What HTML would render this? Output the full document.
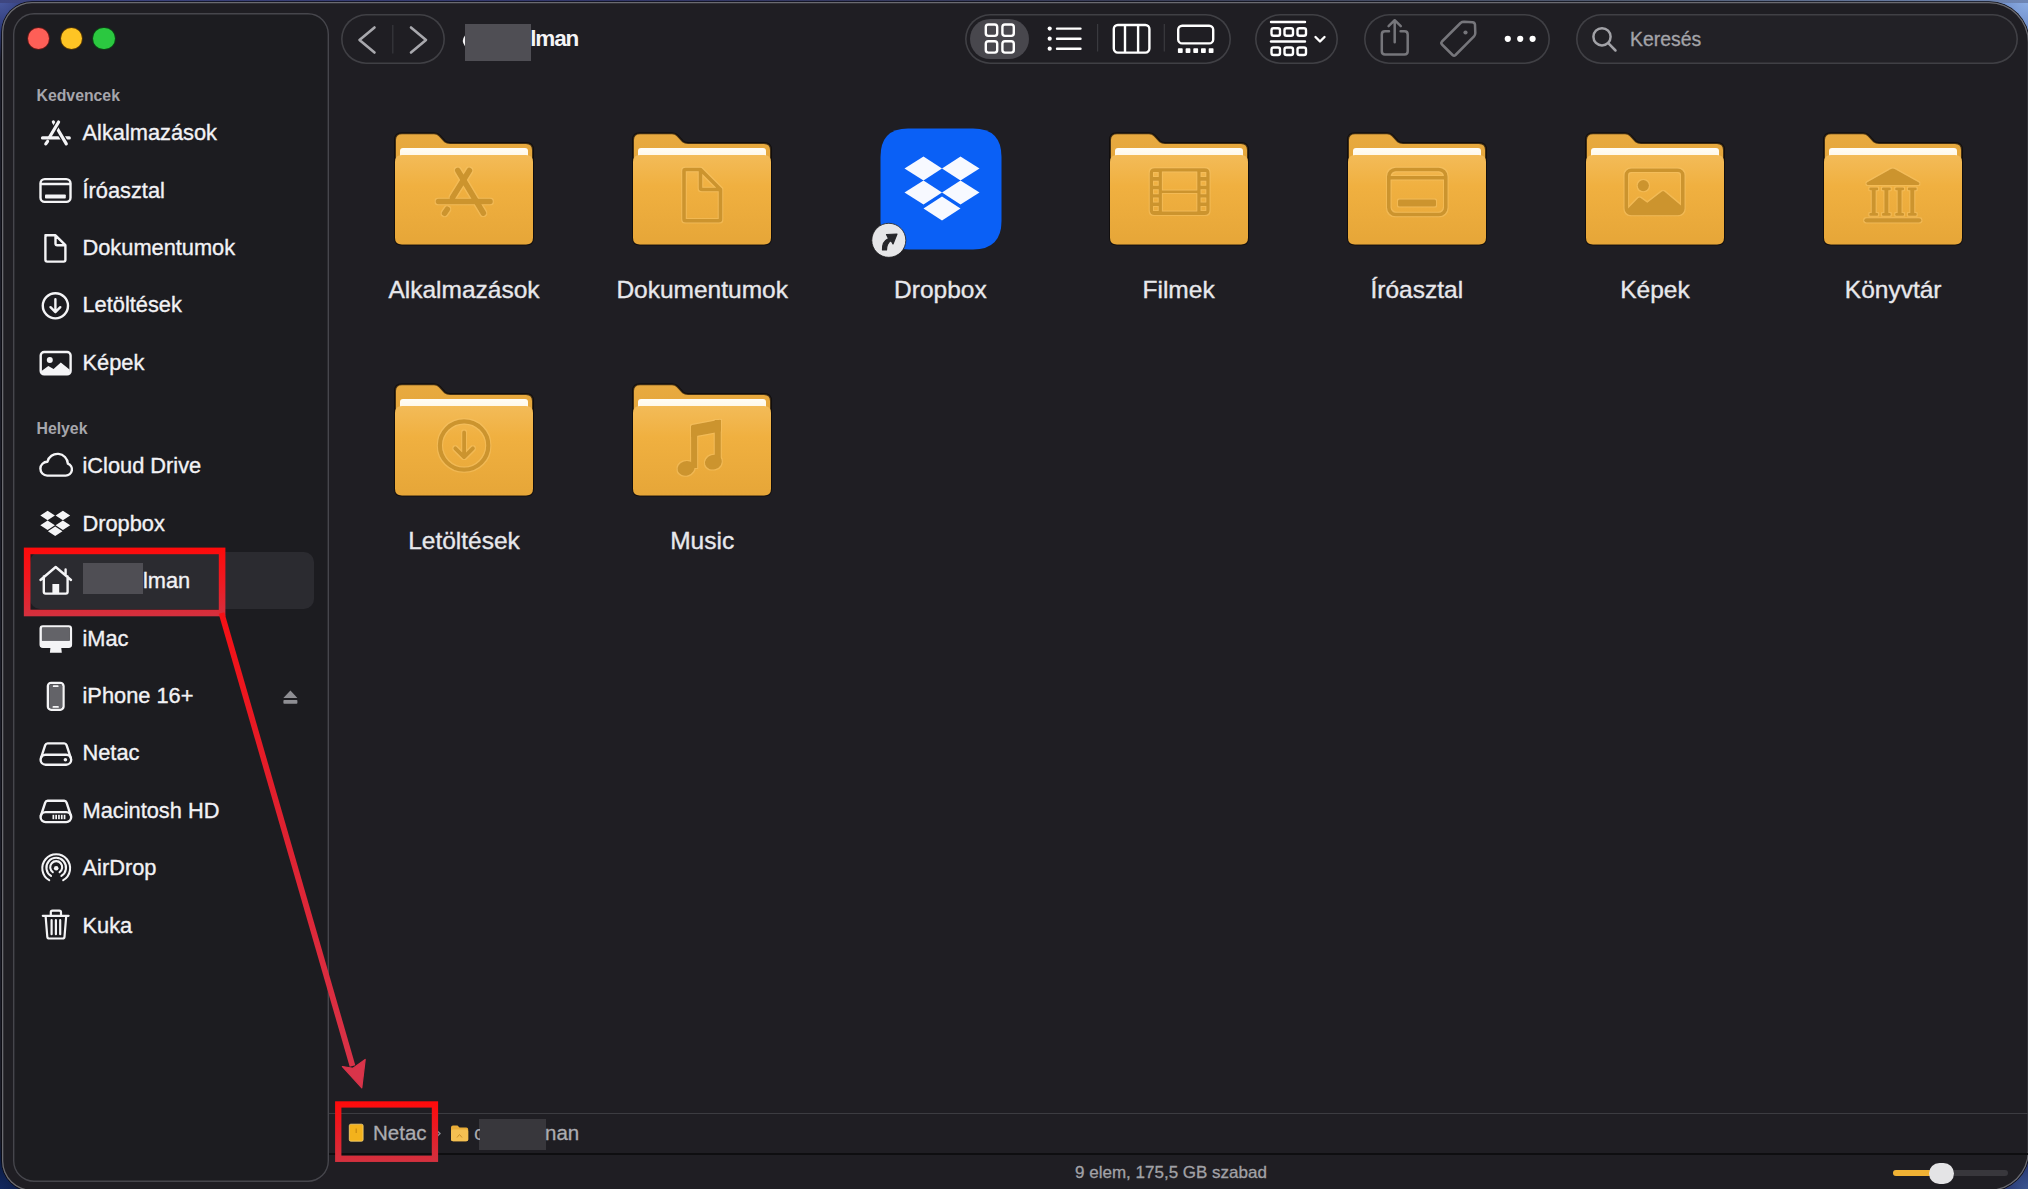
<!DOCTYPE html>
<html><head><meta charset="utf-8">
<style>
*{margin:0;padding:0;box-sizing:border-box}
html,body{width:2028px;height:1189px;overflow:hidden;background:#1f1e23;font-family:"Liberation Sans",sans-serif}
.a{position:absolute}
.t{position:absolute;white-space:nowrap;line-height:1}
svg{position:absolute;overflow:visible}
</style></head><body>
<div class="a" style="left:0;top:0;width:2028px;height:1189px;background:radial-gradient(circle at 0 0,#4a5aa0 0,#2e3a78 30px,#1c1d2a 60px,transparent 62px),radial-gradient(circle at 2028px 0,#8fb0e6 0,#6d8cc8 30px,#555c70 60px,transparent 64px),radial-gradient(circle at 0 1189px,#12285e 0,#0b1a40 30px,transparent 50px),radial-gradient(circle at 2028px 1189px,#3a5590 0,#24306a 30px,transparent 50px),#1c1d28"></div>
<div class="a" style="left:0;top:0;width:2028px;height:2.5px;background:linear-gradient(90deg,#3e4680 0%,#33386a 30%,#3a3e58 55%,#505a70 80%,#6f86b4 100%)"></div>
<div class="a" style="left:1.8px;top:1.8px;width:2027.2px;height:1189.2px;border-radius:30px 40px 40px 30px;background:#1f1e23;box-shadow:inset 0 0 0 1.3px #6a6a70,0 0 0 0.8px #0a0a10"></div>
<div class="a" style="left:13px;top:13px;width:316px;height:1169px;border-radius:21px;background:#1c1c20;box-shadow:inset 0 0 0 1.4px #46464c"></div>
<div class="a" style="left:27.8px;top:27.6px;width:21.4px;height:21.4px;border-radius:50%;background:#fe5f57;box-shadow:0 0 0 0.8px #6a1a18"></div>
<div class="a" style="left:60.6px;top:27.6px;width:21.4px;height:21.4px;border-radius:50%;background:#fec424;box-shadow:0 0 0 0.8px #5a3a05"></div>
<div class="a" style="left:93.4px;top:27.6px;width:21.4px;height:21.4px;border-radius:50%;background:#2bc840;box-shadow:0 0 0 0.8px #0a4a14"></div>
<div class="t" style="left:36.5px;top:87.9px;font-size:15.8px;color:#a6a6ac;font-weight:bold;">Kedvencek</div>
<div class="t" style="left:36.5px;top:421.0px;font-size:15.8px;color:#a6a6ac;font-weight:bold;">Helyek</div>
<div class="a" style="left:30px;top:552px;width:284px;height:57px;border-radius:10px;background:#2b2b30"></div>
<div class="t" style="left:82.5px;top:122.2px;font-size:21.8px;color:#f2f2f5;font-weight:normal;-webkit-text-stroke:0.35px #f2f2f5">Alkalmazások</div>
<div class="t" style="left:82.5px;top:179.6px;font-size:21.8px;color:#f2f2f5;font-weight:normal;-webkit-text-stroke:0.35px #f2f2f5">Íróasztal</div>
<div class="t" style="left:82.5px;top:237.0px;font-size:21.8px;color:#f2f2f5;font-weight:normal;-webkit-text-stroke:0.35px #f2f2f5">Dokumentumok</div>
<div class="t" style="left:82.5px;top:294.3px;font-size:21.8px;color:#f2f2f5;font-weight:normal;-webkit-text-stroke:0.35px #f2f2f5">Letöltések</div>
<div class="t" style="left:82.5px;top:351.7px;font-size:21.8px;color:#f2f2f5;font-weight:normal;-webkit-text-stroke:0.35px #f2f2f5">Képek</div>
<div class="t" style="left:82.5px;top:455.3px;font-size:21.8px;color:#f2f2f5;font-weight:normal;-webkit-text-stroke:0.35px #f2f2f5">iCloud Drive</div>
<div class="t" style="left:82.5px;top:512.7px;font-size:21.8px;color:#f2f2f5;font-weight:normal;-webkit-text-stroke:0.35px #f2f2f5">Dropbox</div>
<div class="t" style="left:82.5px;top:570.0px;font-size:21.8px;color:#f2f2f5;font-weight:normal;-webkit-text-stroke:0.35px #f2f2f5"><span style="display:inline-block;width:60.5px"></span>lman</div>
<div class="a" style="left:83px;top:563px;width:59.5px;height:31px;background:#4f4e54"></div>
<div class="t" style="left:82.5px;top:627.5px;font-size:21.8px;color:#f2f2f5;font-weight:normal;-webkit-text-stroke:0.35px #f2f2f5">iMac</div>
<div class="t" style="left:82.5px;top:684.9px;font-size:21.8px;color:#f2f2f5;font-weight:normal;-webkit-text-stroke:0.35px #f2f2f5">iPhone 16+</div>
<div class="t" style="left:82.5px;top:742.3px;font-size:21.8px;color:#f2f2f5;font-weight:normal;-webkit-text-stroke:0.35px #f2f2f5">Netac</div>
<div class="t" style="left:82.5px;top:799.6px;font-size:21.8px;color:#f2f2f5;font-weight:normal;-webkit-text-stroke:0.35px #f2f2f5">Macintosh HD</div>
<div class="t" style="left:82.5px;top:856.8px;font-size:21.8px;color:#f2f2f5;font-weight:normal;-webkit-text-stroke:0.35px #f2f2f5">AirDrop</div>
<div class="t" style="left:82.5px;top:915.1px;font-size:21.8px;color:#f2f2f5;font-weight:normal;-webkit-text-stroke:0.35px #f2f2f5">Kuka</div>
<svg style="left:0;top:0" width="330" height="1000" viewBox="0 0 330 1000">
<g fill="none" stroke="#f4f4f6" stroke-width="2.4" stroke-linecap="round" stroke-linejoin="round">
<path d="M42.5 137.9 L69.3 137.9 M45.8 143.9 L47.6 141.4" stroke-width="3.2"/><path d="M53.4 122 L66.3 143.9" stroke="#1c1c20" stroke-width="5.6"/><path d="M53.4 122 L66.3 143.9" stroke-width="3.2"/><path d="M58.6 122 L52 133" stroke="#1c1c20" stroke-width="5.4" stroke-linecap="butt"/><path d="M58.6 122 L49.5 137.2" stroke-width="3.2"/>
<rect x="40.5" y="179.1" width="30" height="22.8" rx="4.2"/>
<path d="M41 184 L70 184"/>
<path d="M45.4 235.3 L55.5 235.3 L65.4 245.2 L65.4 259.8 Q65.4 261.6 63.6 261.6 L47.2 261.6 Q45.4 261.6 45.4 259.8 L45.4 237.1 Q45.4 235.3 47.2 235.3 M55.5 235.5 L55.5 243.4 Q55.5 245.2 57.3 245.2 L65.2 245.2"/>
<circle cx="55.4" cy="305.8" r="12.6"/>
<path d="M55.4 299.3 L55.4 312 M50.5 307.2 L55.4 312.2 L60.3 307.2"/>
<rect x="40.7" y="352" width="29.9" height="22.4" rx="3.5"/>
<path d="M47.2 475.6 A6.9 6.9 0 1 1 47.4 461.8 A10.4 10.4 0 0 1 67.88 463.59 A6.2 6.2 0 0 1 65.7 475.6 Z"/>
<path d="M43.8 576.5 L43.8 591.8 Q43.8 593.6 45.6 593.6 L65.8 593.6 Q67.6 593.6 67.6 591.8 L67.6 576.5 M40.5 580 L55.7 567 L71 580 M65.6 575 L65.6 569.5"/>
<rect x="40.7" y="626.4" width="30.2" height="20.4" rx="2.2"/>
<rect x="47.9" y="682.9" width="15.6" height="26.8" rx="3.2"/>
<path d="M41 758 L45.2 745.2 Q45.9 743.4 47.6 743.4 L64.2 743.4 Q65.9 743.4 66.6 745.2 L70.8 758"/>
<rect x="40.6" y="754.7" width="30.6" height="10" rx="5"/>
<path d="M41 815.4 L45.2 802.6 Q45.9 800.8 47.6 800.8 L64.2 800.8 Q65.9 800.8 66.6 802.6 L70.8 815.4"/>
<rect x="40.6" y="812.1" width="30.6" height="10" rx="5"/>
<path d="M49.2 880.2 A13.9 13.9 0 1 1 63.2 880.2 M51 875.9 A9.8 9.8 0 1 1 61.4 875.9 M52.8 872.1 A6 6 0 1 1 59.6 872.1" stroke-width="2.1"/>
<path d="M42.8 915.8 L68.6 915.8 M50.8 915.2 L50.8 912.3 Q50.8 910.6 52.5 910.6 L59.3 910.6 Q61 910.6 61 912.3 L61 915.2 M45.6 916 L47.3 936.8 Q47.5 938.5 49.2 938.5 L62.6 938.5 Q64.3 938.5 64.5 936.8 L66.2 916 M51.6 920.2 L51.6 934.2 M55.9 920.2 L55.9 934.2 M60.2 920.2 L60.2 934.2" stroke-width="2.2"/>
</g>
<g fill="#f4f4f6">
<circle cx="49.8" cy="360" r="3"/>
<path d="M41.5 371 L48.3 366 L53.6 369 L60.8 362.5 L69.8 369.7 L69.8 372.8 Q69.8 374.4 68.2 374.4 L43.1 374.4 Q41.5 374.4 41.5 372.8 Z"/>
<rect x="45" y="194.4" width="20.8" height="4.2" rx="0.8"/>
<path d="M40.3 515.5 L47.6 510.8 L54.9 515.5 L47.6 520.3 Z M55.6 515.5 L62.9 510.8 L70.2 515.5 L62.9 520.3 Z M40.3 525.2 L47.6 520.5 L54.9 525.2 L47.6 530 Z M55.6 525.2 L62.9 520.5 L70.2 525.2 L62.9 530 Z M47.9 531.2 L55.2 526.5 L62.5 531.2 L55.2 536 Z"/>
<rect x="52.4" y="584" width="6.8" height="10" />
<path d="M50.5 647 L61.2 647 L61.8 652.8 L49.9 652.8 Z"/>
<rect x="40" y="640.5" width="31.5" height="6.5" rx="1.5"/>
<rect x="52.8" y="685.3" width="5.8" height="1.8" rx="0.9"/>
<rect x="52.5" y="706" width="6.4" height="1.8" rx="0.9"/>
<circle cx="65.4" cy="759.7" r="1.8"/>
<circle cx="56.2" cy="868.2" r="2.3"/>
<rect x="52.5" y="814.8" width="1.7" height="4.4"/><rect x="55.3" y="814.8" width="1.7" height="4.4"/><rect x="58.1" y="814.8" width="1.7" height="4.4"/><rect x="60.9" y="814.8" width="1.7" height="4.4"/><rect x="63.7" y="814.8" width="1.7" height="4.4"/>
</g>
<rect x="42" y="627.7" width="27.6" height="13" fill="#636368"/>
<rect x="49.2" y="684.2" width="13" height="24.2" rx="2" fill="#636368"/>
<rect x="52.8" y="685.3" width="5.8" height="1.8" rx="0.9" fill="#f4f4f6"/>
<rect x="52.5" y="706" width="6.4" height="1.8" rx="0.9" fill="#f4f4f6"/>
<path d="M290.4 690.5 L297.4 698 L283.4 698 Z" fill="#8e8e93"/>
<rect x="283.4" y="700" width="14" height="3.8" rx="0.8" fill="#8e8e93"/>
</svg>
<div class="a" style="left:341px;top:13.5px;width:104px;height:50px;border-radius:25px;box-shadow:inset 0 0 0 1.6px #404045"></div>
<svg style="left:455px;top:30px" width="20" height="20" viewBox="455 30 20 20"><path d="M466 36.3 Q462.3 40.8 466 45.3" fill="none" stroke="#f4f4f6" stroke-width="2.6"/></svg>
<div class="a" style="left:464.5px;top:24px;width:66.5px;height:37px;background:#4f4e54"></div>
<div class="a" style="left:964.5px;top:13.5px;width:266px;height:50.5px;border-radius:25px;box-shadow:inset 0 0 0 1.6px #404045"></div>
<div class="a" style="left:970px;top:19px;width:59px;height:39.5px;border-radius:20px;background:#48474d"></div>
<div class="a" style="left:1255px;top:13.5px;width:83px;height:50.5px;border-radius:25px;box-shadow:inset 0 0 0 1.6px #404045"></div>
<div class="a" style="left:1364px;top:13.5px;width:186px;height:50.5px;border-radius:25px;box-shadow:inset 0 0 0 1.6px #404045"></div>
<div class="a" style="left:1575.5px;top:13.5px;width:442.5px;height:50px;border-radius:25px;background:#222126;box-shadow:inset 0 0 0 1.6px #404045"></div>
<div class="t" style="left:530.3px;top:28.0px;font-size:22.5px;color:#f4f4f6;font-weight:bold;letter-spacing:-1.2px">lman</div>
<div class="t" style="left:1630.0px;top:29.6px;font-size:19.4px;color:#a4a4a9;font-weight:normal;-webkit-text-stroke:0.3px #a4a4a9">Keresés</div>
<svg style="left:0;top:0" width="2028" height="80" viewBox="0 0 2028 80">
<g fill="none" stroke="#a8a8ad" stroke-width="2.6" stroke-linecap="round" stroke-linejoin="round">
<path d="M374.5 27.5 L359.5 40 L374.5 52.5"/>
<path d="M411 27.5 L426 40 L411 52.5"/>
</g>
<path d="M392.8 25 L392.8 53.5" stroke="#38383d" stroke-width="1.2"/>
<g fill="none" stroke="#ffffff" stroke-width="2.4" stroke-linejoin="round">
<rect x="985.8" y="24.5" width="11.4" height="11.4" rx="2.6"/>
<rect x="1002.4" y="24.5" width="11.4" height="11.4" rx="2.6"/>
<rect x="985.8" y="41.2" width="11.4" height="11.4" rx="2.6"/>
<rect x="1002.4" y="41.2" width="11.4" height="11.4" rx="2.6"/>
<path d="M1057 28.6 L1080.5 28.6 M1057 38.7 L1080.5 38.7 M1057 48.7 L1080.5 48.7" stroke-linecap="round"/>
<rect x="1113.8" y="25" width="35.6" height="27.6" rx="4"/>
<path d="M1125 25.5 L1125 52.5 M1138.1 25.5 L1138.1 52.5"/>
<rect x="1178.2" y="25.7" width="35" height="17.7" rx="4"/>
<path d="M1271 22 L1305 22" stroke-linecap="round"/>
<rect x="1271.5" y="28.2" width="8.5" height="7.5" rx="2"/>
<rect x="1284.5" y="28.2" width="8.5" height="7.5" rx="2"/>
<rect x="1297.5" y="28.2" width="8.5" height="7.5" rx="2"/>
<path d="M1271 41.5 L1305 41.5" stroke-linecap="round"/>
<rect x="1271.5" y="47.5" width="8.5" height="7.5" rx="2"/>
<rect x="1284.5" y="47.5" width="8.5" height="7.5" rx="2"/>
<rect x="1297.5" y="47.5" width="8.5" height="7.5" rx="2"/>
<path d="M1315.5 37 L1320 41.5 L1324.5 37" stroke-linecap="round"/>
</g>
<g fill="#ffffff">
<circle cx="1049.7" cy="28.6" r="2.1"/><circle cx="1049.7" cy="38.7" r="2.1"/><circle cx="1049.7" cy="48.7" r="2.1"/>
<rect x="1177.9" y="48.2" width="4.8" height="4.8" rx="0.8"/><rect x="1185.6" y="48.2" width="4.8" height="4.8" rx="0.8"/><rect x="1193.3" y="48.2" width="4.8" height="4.8" rx="0.8"/><rect x="1201" y="48.2" width="4.8" height="4.8" rx="0.8"/><rect x="1208.7" y="48.2" width="4.8" height="4.8" rx="0.8"/>
<circle cx="1507.8" cy="38.8" r="3.1"/><circle cx="1520.2" cy="38.8" r="3.1"/><circle cx="1532.6" cy="38.8" r="3.1"/>
</g>
<path d="M1097.6 24 L1097.6 51.5 M1164.3 24 L1164.3 51.5" stroke="#3a3a3f" stroke-width="1.2"/>
<g fill="none" stroke="#76767b" stroke-width="2.5" stroke-linecap="round" stroke-linejoin="round">
<path d="M1389 31.2 L1385 31.2 Q1381.8 31.2 1381.8 34.4 L1381.8 51.2 Q1381.8 54.4 1385 54.4 L1404.5 54.4 Q1407.7 54.4 1407.7 51.2 L1407.7 34.4 Q1407.7 31.2 1404.5 31.2 L1400.6 31.2"/>
<path d="M1394.7 42.2 L1394.7 20.5 M1388.6 26.2 L1394.7 20.2 L1400.8 26.2"/>
<path d="M1442 41.5 L1460.5 23 Q1462 21.8 1464 21.8 L1472.5 22.2 Q1474.8 22.4 1475 24.7 L1475.3 33 Q1475.3 35 1474 36.4 L1455.5 55 Q1454 56.4 1452.6 55 L1442 44.5 Q1440.6 43 1442 41.5 Z"/>
</g>
<circle cx="1465.5" cy="32.5" r="2.1" fill="#76767b"/>
<g fill="none" stroke="#a2a2a7" stroke-width="2.5" stroke-linecap="round">
<circle cx="1602" cy="36.8" r="8.6"/>
<path d="M1608.3 43.2 L1615.5 50.5"/>
</g>
</svg>
<div class="t" style="left:164.0px;top:278.2px;width:600px;text-align:center;font-size:24.5px;color:#e8e8ec;font-weight:normal;-webkit-text-stroke:0.35px #e8e8ec">Alkalmazások</div>
<div class="t" style="left:402.2px;top:278.2px;width:600px;text-align:center;font-size:24.5px;color:#e8e8ec;font-weight:normal;-webkit-text-stroke:0.35px #e8e8ec">Dokumentumok</div>
<div class="t" style="left:640.4px;top:278.2px;width:600px;text-align:center;font-size:24.5px;color:#e8e8ec;font-weight:normal;-webkit-text-stroke:0.35px #e8e8ec">Dropbox</div>
<div class="t" style="left:878.6px;top:278.2px;width:600px;text-align:center;font-size:24.5px;color:#e8e8ec;font-weight:normal;-webkit-text-stroke:0.35px #e8e8ec">Filmek</div>
<div class="t" style="left:1116.8px;top:278.2px;width:600px;text-align:center;font-size:24.5px;color:#e8e8ec;font-weight:normal;-webkit-text-stroke:0.35px #e8e8ec">Íróasztal</div>
<div class="t" style="left:1355.0px;top:278.2px;width:600px;text-align:center;font-size:24.5px;color:#e8e8ec;font-weight:normal;-webkit-text-stroke:0.35px #e8e8ec">Képek</div>
<div class="t" style="left:1593.2px;top:278.2px;width:600px;text-align:center;font-size:24.5px;color:#e8e8ec;font-weight:normal;-webkit-text-stroke:0.35px #e8e8ec">Könyvtár</div>
<div class="t" style="left:164.0px;top:529.1px;width:600px;text-align:center;font-size:24.5px;color:#e8e8ec;font-weight:normal;-webkit-text-stroke:0.35px #e8e8ec">Letöltések</div>
<div class="t" style="left:402.2px;top:529.1px;width:600px;text-align:center;font-size:24.5px;color:#e8e8ec;font-weight:normal;-webkit-text-stroke:0.35px #e8e8ec">Music</div>
<svg style="left:391.0px;top:128.7px" width="146" height="120" viewBox="-4 -4 146 120">
<defs>
<linearGradient id="frapp" x1="0" y1="0" x2="0" y2="1"><stop offset="0" stop-color="#f3bb58"/><stop offset="0.35" stop-color="#f0b040"/><stop offset="1" stop-color="#e6a638"/></linearGradient>
<linearGradient id="bkapp" x1="0" y1="0" x2="0" y2="1"><stop offset="0" stop-color="#e8aa40"/><stop offset="1" stop-color="#dc9c2c"/></linearGradient>
<filter id="hlapp" x="-20%" y="-20%" width="140%" height="140%"><feMorphology in="SourceAlpha" operator="dilate" radius="0.9" result="d"/><feFlood flood-color="#f7c66a" flood-opacity="0.5"/><feComposite in2="d" operator="in" result="h"/><feMerge><feMergeNode in="h"/><feMergeNode in="SourceGraphic"/></feMerge></filter>
<linearGradient id="ppapp" x1="0" y1="0" x2="0" y2="1"><stop offset="0" stop-color="#fffdf6"/><stop offset="0.6" stop-color="#fff8ea"/><stop offset="1" stop-color="#f6d9a0"/></linearGradient>
</defs>
<path d="M0 7 Q0 0.2 7 0.2 L39 0.2 Q42.5 0.2 44.5 2.5 L50 8.5 Q52 10 55 10 L131 10 Q138 10 138 17 L138 104.5 Q138 111.5 131 111.5 L7 111.5 Q0 111.5 0 104.5 Z" fill="url(#bkapp)" stroke="#0d0a08" stroke-opacity="0.75" stroke-width="2"/>
<rect x="5" y="15" width="128" height="12" rx="3" fill="url(#ppapp)"/>
<path d="M0 29 Q0 22 7 22 L131 22 Q138 22 138 29 L138 104.5 Q138 111.5 131 111.5 L7 111.5 Q0 111.5 0 104.5 Z" fill="url(#frapp)"/>
<g fill="none" stroke="#cc942e" stroke-width="3.6" stroke-linecap="round" stroke-linejoin="round" filter="url(#hlapp)"><path d="M74.4 37.5 L57.5 64.5 M62.8 37.5 L88.3 80 M43.5 68.5 L95 68.5 M52.3 76.3 L49.6 80.3" stroke-width="5.6"/></g>
</svg>
<svg style="left:629.2px;top:128.7px" width="146" height="120" viewBox="-4 -4 146 120">
<defs>
<linearGradient id="frdoc" x1="0" y1="0" x2="0" y2="1"><stop offset="0" stop-color="#f3bb58"/><stop offset="0.35" stop-color="#f0b040"/><stop offset="1" stop-color="#e6a638"/></linearGradient>
<linearGradient id="bkdoc" x1="0" y1="0" x2="0" y2="1"><stop offset="0" stop-color="#e8aa40"/><stop offset="1" stop-color="#dc9c2c"/></linearGradient>
<filter id="hldoc" x="-20%" y="-20%" width="140%" height="140%"><feMorphology in="SourceAlpha" operator="dilate" radius="0.9" result="d"/><feFlood flood-color="#f7c66a" flood-opacity="0.5"/><feComposite in2="d" operator="in" result="h"/><feMerge><feMergeNode in="h"/><feMergeNode in="SourceGraphic"/></feMerge></filter>
<linearGradient id="ppdoc" x1="0" y1="0" x2="0" y2="1"><stop offset="0" stop-color="#fffdf6"/><stop offset="0.6" stop-color="#fff8ea"/><stop offset="1" stop-color="#f6d9a0"/></linearGradient>
</defs>
<path d="M0 7 Q0 0.2 7 0.2 L39 0.2 Q42.5 0.2 44.5 2.5 L50 8.5 Q52 10 55 10 L131 10 Q138 10 138 17 L138 104.5 Q138 111.5 131 111.5 L7 111.5 Q0 111.5 0 104.5 Z" fill="url(#bkdoc)" stroke="#0d0a08" stroke-opacity="0.75" stroke-width="2"/>
<rect x="5" y="15" width="128" height="12" rx="3" fill="url(#ppdoc)"/>
<path d="M0 29 Q0 22 7 22 L131 22 Q138 22 138 29 L138 104.5 Q138 111.5 131 111.5 L7 111.5 Q0 111.5 0 104.5 Z" fill="url(#frdoc)"/>
<g fill="none" stroke="#cc942e" stroke-width="3.6" stroke-linecap="round" stroke-linejoin="round" filter="url(#hldoc)"><path d="M51 38 Q51 36.5 52.5 36.5 L67.5 36.5 L87.5 56.5 L87.5 86 Q87.5 87.8 85.8 87.8 L52.8 87.8 Q51 87.8 51 86 Z M67.5 37 L67.5 55 Q67.5 56.5 69 56.5 L87 56.5"/></g>
</svg>
<svg style="left:1105.6px;top:128.7px" width="146" height="120" viewBox="-4 -4 146 120">
<defs>
<linearGradient id="frfilm" x1="0" y1="0" x2="0" y2="1"><stop offset="0" stop-color="#f3bb58"/><stop offset="0.35" stop-color="#f0b040"/><stop offset="1" stop-color="#e6a638"/></linearGradient>
<linearGradient id="bkfilm" x1="0" y1="0" x2="0" y2="1"><stop offset="0" stop-color="#e8aa40"/><stop offset="1" stop-color="#dc9c2c"/></linearGradient>
<filter id="hlfilm" x="-20%" y="-20%" width="140%" height="140%"><feMorphology in="SourceAlpha" operator="dilate" radius="0.9" result="d"/><feFlood flood-color="#f7c66a" flood-opacity="0.5"/><feComposite in2="d" operator="in" result="h"/><feMerge><feMergeNode in="h"/><feMergeNode in="SourceGraphic"/></feMerge></filter>
<linearGradient id="ppfilm" x1="0" y1="0" x2="0" y2="1"><stop offset="0" stop-color="#fffdf6"/><stop offset="0.6" stop-color="#fff8ea"/><stop offset="1" stop-color="#f6d9a0"/></linearGradient>
</defs>
<path d="M0 7 Q0 0.2 7 0.2 L39 0.2 Q42.5 0.2 44.5 2.5 L50 8.5 Q52 10 55 10 L131 10 Q138 10 138 17 L138 104.5 Q138 111.5 131 111.5 L7 111.5 Q0 111.5 0 104.5 Z" fill="url(#bkfilm)" stroke="#0d0a08" stroke-opacity="0.75" stroke-width="2"/>
<rect x="5" y="15" width="128" height="12" rx="3" fill="url(#ppfilm)"/>
<path d="M0 29 Q0 22 7 22 L131 22 Q138 22 138 29 L138 104.5 Q138 111.5 131 111.5 L7 111.5 Q0 111.5 0 104.5 Z" fill="url(#frfilm)"/>
<g fill="none" stroke="#cc942e" stroke-width="3.6" stroke-linecap="round" stroke-linejoin="round" filter="url(#hlfilm)"><path fill="#cc942e" stroke="none" fill-rule="evenodd" d="M44.7 35.2 L94.6 35.2 Q99.6 35.2 99.6 40.2 L99.6 77 Q99.6 82 94.6 82 L44.7 82 Q39.7 82 39.7 77 L39.7 40.2 Q39.7 35.2 44.7 35.2 Z M51.9 38.6 L87.3 38.6 L87.3 57.4 L51.9 57.4 Z M51.9 60.1 L87.3 60.1 L87.3 78.6 L51.9 78.6 Z M43 39.1 h5.7 v4.9 h-5.7 Z M43 47.8 h5.7 v4.9 h-5.7 Z M43 56.3 h5.7 v4.9 h-5.7 Z M43 64.5 h5.7 v4.9 h-5.7 Z M43 73 h5.7 v4.9 h-5.7 Z M90.6 39.1 h5.7 v4.9 h-5.7 Z M90.6 47.8 h5.7 v4.9 h-5.7 Z M90.6 56.3 h5.7 v4.9 h-5.7 Z M90.6 64.5 h5.7 v4.9 h-5.7 Z M90.6 73 h5.7 v4.9 h-5.7 Z"/></g>
</svg>
<svg style="left:1343.8px;top:128.7px" width="146" height="120" viewBox="-4 -4 146 120">
<defs>
<linearGradient id="frdesk" x1="0" y1="0" x2="0" y2="1"><stop offset="0" stop-color="#f3bb58"/><stop offset="0.35" stop-color="#f0b040"/><stop offset="1" stop-color="#e6a638"/></linearGradient>
<linearGradient id="bkdesk" x1="0" y1="0" x2="0" y2="1"><stop offset="0" stop-color="#e8aa40"/><stop offset="1" stop-color="#dc9c2c"/></linearGradient>
<filter id="hldesk" x="-20%" y="-20%" width="140%" height="140%"><feMorphology in="SourceAlpha" operator="dilate" radius="0.9" result="d"/><feFlood flood-color="#f7c66a" flood-opacity="0.5"/><feComposite in2="d" operator="in" result="h"/><feMerge><feMergeNode in="h"/><feMergeNode in="SourceGraphic"/></feMerge></filter>
<linearGradient id="ppdesk" x1="0" y1="0" x2="0" y2="1"><stop offset="0" stop-color="#fffdf6"/><stop offset="0.6" stop-color="#fff8ea"/><stop offset="1" stop-color="#f6d9a0"/></linearGradient>
</defs>
<path d="M0 7 Q0 0.2 7 0.2 L39 0.2 Q42.5 0.2 44.5 2.5 L50 8.5 Q52 10 55 10 L131 10 Q138 10 138 17 L138 104.5 Q138 111.5 131 111.5 L7 111.5 Q0 111.5 0 104.5 Z" fill="url(#bkdesk)" stroke="#0d0a08" stroke-opacity="0.75" stroke-width="2"/>
<rect x="5" y="15" width="128" height="12" rx="3" fill="url(#ppdesk)"/>
<path d="M0 29 Q0 22 7 22 L131 22 Q138 22 138 29 L138 104.5 Q138 111.5 131 111.5 L7 111.5 Q0 111.5 0 104.5 Z" fill="url(#frdesk)"/>
<g fill="none" stroke="#cc942e" stroke-width="3.6" stroke-linecap="round" stroke-linejoin="round" filter="url(#hldesk)"><rect x="40.8" y="36.5" width="57" height="45" rx="7"/><path d="M41 44.8 L97 44.8"/><rect x="50" y="66.5" width="38" height="7" rx="1.5" fill="#cc942e" stroke="none"/></g>
</svg>
<svg style="left:1582.0px;top:128.7px" width="146" height="120" viewBox="-4 -4 146 120">
<defs>
<linearGradient id="frpic" x1="0" y1="0" x2="0" y2="1"><stop offset="0" stop-color="#f3bb58"/><stop offset="0.35" stop-color="#f0b040"/><stop offset="1" stop-color="#e6a638"/></linearGradient>
<linearGradient id="bkpic" x1="0" y1="0" x2="0" y2="1"><stop offset="0" stop-color="#e8aa40"/><stop offset="1" stop-color="#dc9c2c"/></linearGradient>
<filter id="hlpic" x="-20%" y="-20%" width="140%" height="140%"><feMorphology in="SourceAlpha" operator="dilate" radius="0.9" result="d"/><feFlood flood-color="#f7c66a" flood-opacity="0.5"/><feComposite in2="d" operator="in" result="h"/><feMerge><feMergeNode in="h"/><feMergeNode in="SourceGraphic"/></feMerge></filter>
<linearGradient id="pppic" x1="0" y1="0" x2="0" y2="1"><stop offset="0" stop-color="#fffdf6"/><stop offset="0.6" stop-color="#fff8ea"/><stop offset="1" stop-color="#f6d9a0"/></linearGradient>
</defs>
<path d="M0 7 Q0 0.2 7 0.2 L39 0.2 Q42.5 0.2 44.5 2.5 L50 8.5 Q52 10 55 10 L131 10 Q138 10 138 17 L138 104.5 Q138 111.5 131 111.5 L7 111.5 Q0 111.5 0 104.5 Z" fill="url(#bkpic)" stroke="#0d0a08" stroke-opacity="0.75" stroke-width="2"/>
<rect x="5" y="15" width="128" height="12" rx="3" fill="url(#pppic)"/>
<path d="M0 29 Q0 22 7 22 L131 22 Q138 22 138 29 L138 104.5 Q138 111.5 131 111.5 L7 111.5 Q0 111.5 0 104.5 Z" fill="url(#frpic)"/>
<g fill="none" stroke="#cc942e" stroke-width="3.6" stroke-linecap="round" stroke-linejoin="round" filter="url(#hlpic)"><rect x="40.3" y="37.2" width="56.5" height="43.2" rx="5"/><circle cx="57.3" cy="52.6" r="5.6" fill="#cc942e" stroke="none"/><path d="M42 75.5 L52.3 65 Q53.3 64 54.3 64.8 L61.3 69.8 L75.9 58.4 Q77.1 57.5 78.3 58.4 L95 72.5 L95 80.4 L42 80.4 Z" fill="#cc942e" stroke="none"/></g>
</svg>
<svg style="left:1820.2px;top:128.7px" width="146" height="120" viewBox="-4 -4 146 120">
<defs>
<linearGradient id="frlib" x1="0" y1="0" x2="0" y2="1"><stop offset="0" stop-color="#f3bb58"/><stop offset="0.35" stop-color="#f0b040"/><stop offset="1" stop-color="#e6a638"/></linearGradient>
<linearGradient id="bklib" x1="0" y1="0" x2="0" y2="1"><stop offset="0" stop-color="#e8aa40"/><stop offset="1" stop-color="#dc9c2c"/></linearGradient>
<filter id="hllib" x="-20%" y="-20%" width="140%" height="140%"><feMorphology in="SourceAlpha" operator="dilate" radius="0.9" result="d"/><feFlood flood-color="#f7c66a" flood-opacity="0.5"/><feComposite in2="d" operator="in" result="h"/><feMerge><feMergeNode in="h"/><feMergeNode in="SourceGraphic"/></feMerge></filter>
<linearGradient id="pplib" x1="0" y1="0" x2="0" y2="1"><stop offset="0" stop-color="#fffdf6"/><stop offset="0.6" stop-color="#fff8ea"/><stop offset="1" stop-color="#f6d9a0"/></linearGradient>
</defs>
<path d="M0 7 Q0 0.2 7 0.2 L39 0.2 Q42.5 0.2 44.5 2.5 L50 8.5 Q52 10 55 10 L131 10 Q138 10 138 17 L138 104.5 Q138 111.5 131 111.5 L7 111.5 Q0 111.5 0 104.5 Z" fill="url(#bklib)" stroke="#0d0a08" stroke-opacity="0.75" stroke-width="2"/>
<rect x="5" y="15" width="128" height="12" rx="3" fill="url(#pplib)"/>
<path d="M0 29 Q0 22 7 22 L131 22 Q138 22 138 29 L138 104.5 Q138 111.5 131 111.5 L7 111.5 Q0 111.5 0 104.5 Z" fill="url(#frlib)"/>
<g fill="none" stroke="#cc942e" stroke-width="3.6" stroke-linecap="round" stroke-linejoin="round" filter="url(#hllib)"><g fill="#cc942e" stroke="none"><path d="M66.5 36.2 Q68.8 35 71.1 36.2 L94.5 49.3 Q96.5 50.6 94.5 51.9 L43.6 51.9 Q41.3 50.6 43.3 49.3 Z"/><rect x="45.3" y="54.6" width="8.8" height="2.7" rx="1"/><rect x="58" y="54.6" width="8.8" height="2.7" rx="1"/><rect x="71.2" y="54.6" width="8.8" height="2.7" rx="1"/><rect x="83.9" y="54.6" width="8.8" height="2.7" rx="1"/><rect x="47.7" y="57" width="4" height="23.3"/><rect x="60.4" y="57" width="4" height="23.3"/><rect x="73.6" y="57" width="4" height="23.3"/><rect x="86.3" y="57" width="4" height="23.3"/><rect x="45.3" y="80.1" width="8.8" height="2.7" rx="1"/><rect x="58" y="80.1" width="8.8" height="2.7" rx="1"/><rect x="71.2" y="80.1" width="8.8" height="2.7" rx="1"/><rect x="83.9" y="80.1" width="8.8" height="2.7" rx="1"/><rect x="40.3" y="85.2" width="57" height="4.3" rx="2.15"/></g></g>
</svg>
<svg style="left:391.0px;top:379.7px" width="146" height="120" viewBox="-4 -4 146 120">
<defs>
<linearGradient id="frdl" x1="0" y1="0" x2="0" y2="1"><stop offset="0" stop-color="#f3bb58"/><stop offset="0.35" stop-color="#f0b040"/><stop offset="1" stop-color="#e6a638"/></linearGradient>
<linearGradient id="bkdl" x1="0" y1="0" x2="0" y2="1"><stop offset="0" stop-color="#e8aa40"/><stop offset="1" stop-color="#dc9c2c"/></linearGradient>
<filter id="hldl" x="-20%" y="-20%" width="140%" height="140%"><feMorphology in="SourceAlpha" operator="dilate" radius="0.9" result="d"/><feFlood flood-color="#f7c66a" flood-opacity="0.5"/><feComposite in2="d" operator="in" result="h"/><feMerge><feMergeNode in="h"/><feMergeNode in="SourceGraphic"/></feMerge></filter>
<linearGradient id="ppdl" x1="0" y1="0" x2="0" y2="1"><stop offset="0" stop-color="#fffdf6"/><stop offset="0.6" stop-color="#fff8ea"/><stop offset="1" stop-color="#f6d9a0"/></linearGradient>
</defs>
<path d="M0 7 Q0 0.2 7 0.2 L39 0.2 Q42.5 0.2 44.5 2.5 L50 8.5 Q52 10 55 10 L131 10 Q138 10 138 17 L138 104.5 Q138 111.5 131 111.5 L7 111.5 Q0 111.5 0 104.5 Z" fill="url(#bkdl)" stroke="#0d0a08" stroke-opacity="0.75" stroke-width="2"/>
<rect x="5" y="15" width="128" height="12" rx="3" fill="url(#ppdl)"/>
<path d="M0 29 Q0 22 7 22 L131 22 Q138 22 138 29 L138 104.5 Q138 111.5 131 111.5 L7 111.5 Q0 111.5 0 104.5 Z" fill="url(#frdl)"/>
<g fill="none" stroke="#cc942e" stroke-width="3.6" stroke-linecap="round" stroke-linejoin="round" filter="url(#hldl)"><circle cx="69.1" cy="61.5" r="24.2" stroke-width="4.2"/><path d="M69.1 48.5 L69.1 72.5 M60.3 64.3 L69.1 73.1 L77.9 64.3" stroke-width="3.8"/></g>
</svg>
<svg style="left:629.2px;top:379.7px" width="146" height="120" viewBox="-4 -4 146 120">
<defs>
<linearGradient id="frmusic" x1="0" y1="0" x2="0" y2="1"><stop offset="0" stop-color="#f3bb58"/><stop offset="0.35" stop-color="#f0b040"/><stop offset="1" stop-color="#e6a638"/></linearGradient>
<linearGradient id="bkmusic" x1="0" y1="0" x2="0" y2="1"><stop offset="0" stop-color="#e8aa40"/><stop offset="1" stop-color="#dc9c2c"/></linearGradient>
<filter id="hlmusic" x="-20%" y="-20%" width="140%" height="140%"><feMorphology in="SourceAlpha" operator="dilate" radius="0.9" result="d"/><feFlood flood-color="#f7c66a" flood-opacity="0.5"/><feComposite in2="d" operator="in" result="h"/><feMerge><feMergeNode in="h"/><feMergeNode in="SourceGraphic"/></feMerge></filter>
<linearGradient id="ppmusic" x1="0" y1="0" x2="0" y2="1"><stop offset="0" stop-color="#fffdf6"/><stop offset="0.6" stop-color="#fff8ea"/><stop offset="1" stop-color="#f6d9a0"/></linearGradient>
</defs>
<path d="M0 7 Q0 0.2 7 0.2 L39 0.2 Q42.5 0.2 44.5 2.5 L50 8.5 Q52 10 55 10 L131 10 Q138 10 138 17 L138 104.5 Q138 111.5 131 111.5 L7 111.5 Q0 111.5 0 104.5 Z" fill="url(#bkmusic)" stroke="#0d0a08" stroke-opacity="0.75" stroke-width="2"/>
<rect x="5" y="15" width="128" height="12" rx="3" fill="url(#ppmusic)"/>
<path d="M0 29 Q0 22 7 22 L131 22 Q138 22 138 29 L138 104.5 Q138 111.5 131 111.5 L7 111.5 Q0 111.5 0 104.5 Z" fill="url(#frmusic)"/>
<g fill="none" stroke="#cc942e" stroke-width="3.6" stroke-linecap="round" stroke-linejoin="round" filter="url(#hlmusic)"><g fill="#cc942e" stroke="none"><path d="M58.1 42.2 Q58.1 41.2 59.1 41 L86.8 35.8 Q87.8 35.6 87.8 36.6 L87.8 47.5 L58.1 53 Z"/><rect x="58.1" y="42" width="6.1" height="42"/><rect x="81.7" y="36" width="6.1" height="42"/><ellipse cx="53" cy="84.3" rx="8.6" ry="7.2" transform="rotate(-18 53 84.3)"/><ellipse cx="80.4" cy="78.2" rx="8.6" ry="7.2" transform="rotate(-18 80.4 78.2)"/></g></g>
</svg>
<svg style="left:880px;top:127.5px" width="122" height="122" viewBox="0 0 122 122">
<path d="M28 0.5 L93 0.5 Q121.5 0.5 121.5 29 L121.5 93 Q121.5 121.5 93 121.5 L29 121.5 Q0.5 121.5 0.5 93 L0.5 29 Q0.5 0.5 28 0.5 Z" fill="#0a60f6"/>
<g fill="#f7f9ff" transform="translate(0,5.5)">
<path d="M24.5 35 L43.5 23 L62 35 L43.5 47 Z"/>
<path d="M62 35 L80.5 23 L99.5 35 L80.5 47 Z"/>
<path d="M24.5 59 L43.5 47 L62 59 L43.5 71 Z"/>
<path d="M62 59 L80.5 47 L99.5 59 L80.5 71 Z"/>
<path d="M43.5 75 L62 63 L80.5 75 L62 87 Z"/>
</g>
</svg>
<svg style="left:871px;top:222.5px" width="36" height="36" viewBox="0 0 36 36">
<circle cx="17.8" cy="17.3" r="17" fill="#e6e6e8" stroke="#1a1a1c" stroke-width="0.8"/>
<path d="M11.5 27 Q11 18.5 17.5 15.5 L15.5 11.5 L26 11 L22 21 L20 17.5 Q15.5 20.5 15.5 27 Z" fill="#26262a" stroke="#26262a" stroke-width="1.2" stroke-linejoin="round"/>
</svg>
<div class="a" style="left:329px;top:1113px;width:1699px;height:1.3px;background:#3c3c41"></div>
<div class="a" style="left:329px;top:1153px;width:1699px;height:1.5px;background:#0e0e10"></div>
<div class="a" style="left:479px;top:1118.5px;width:67px;height:31px;background:#38373c"></div>
<div class="a" style="left:1892.5px;top:1170px;width:115px;height:6px;border-radius:3px;background:#38373c"></div>
<div class="a" style="left:1892.5px;top:1170px;width:45px;height:6px;border-radius:3px;background:#f0b234"></div>
<div class="a" style="left:1928.5px;top:1162.5px;width:25.5px;height:21px;border-radius:11px;background:#e4e4e6"></div>
<div class="t" style="left:373.0px;top:1123.3px;font-size:20.5px;color:#acacb1;font-weight:normal;-webkit-text-stroke:0.3px #acacb1">Netac</div>
<div class="t" style="left:545.0px;top:1123.3px;font-size:20.5px;color:#acacb1;font-weight:normal;-webkit-text-stroke:0.3px #acacb1">nan</div>
<div class="a" style="left:474px;top:1118px;width:6px;height:32px;overflow:hidden"><div class="t" style="left:0.0px;top:5.3px;font-size:20.5px;color:#a9a9ae;font-weight:normal;">c</div>
</div><div class="t" style="left:871.0px;top:1164.4px;width:600px;text-align:center;font-size:17px;color:#a2a2a7;font-weight:normal;-webkit-text-stroke:0.3px #a2a2a7">9 elem, 175,5 GB szabad</div>
<svg style="left:0;top:1100px" width="700" height="60" viewBox="0 1100 700 60">
<rect x="349.3" y="1124.2" width="13.8" height="17" rx="1.5" fill="#f3b21c" stroke="#f8d57a" stroke-width="0.8"/>
<path d="M356.2 1128.5 L356.2 1133" stroke="#c98a10" stroke-width="1.2"/>
<path d="M437.5 1131.2 L440 1133.6 L437.5 1136" fill="none" stroke="#8a8a90" stroke-width="1.4"/>
<path d="M451 1127.5 Q451 1125.5 453 1125.5 L457.5 1125.5 L459.5 1127.5 L466.3 1127.5 Q468.2 1127.5 468.2 1129.5 L468.2 1139.5 Q468.2 1141.3 466.3 1141.3 L453 1141.3 Q451 1141.3 451 1139.5 Z" fill="#e9ad38"/>
<path d="M451 1131 Q451 1129.5 453 1129.5 L466.3 1129.5 Q468.2 1129.5 468.2 1131 L468.2 1139.5 Q468.2 1141.3 466.3 1141.3 L453 1141.3 Q451 1141.3 451 1139.5 Z" fill="#f4c052"/>
<path d="M457 1137.5 L459.5 1134.5 L462 1137.5" fill="none" stroke="#c9902a" stroke-width="1"/>
</svg>
<svg style="left:0;top:0" width="2028" height="1189" viewBox="0 0 2028 1189">
<defs>
<linearGradient id="rb1" x1="0" y1="547" x2="0" y2="617" gradientUnits="userSpaceOnUse"><stop offset="0" stop-color="#ff0a0a"/><stop offset="0.5" stop-color="#ee1a22"/><stop offset="1" stop-color="#d3313f"/></linearGradient>
<linearGradient id="ar" x1="222" y1="613" x2="361" y2="1088" gradientUnits="userSpaceOnUse"><stop offset="0" stop-color="#f51015"/><stop offset="0.4" stop-color="#e0202e"/><stop offset="1" stop-color="#d9344a"/></linearGradient>
<linearGradient id="rb2" x1="0" y1="1101" x2="0" y2="1162" gradientUnits="userSpaceOnUse"><stop offset="0" stop-color="#ff0a0a"/><stop offset="0.5" stop-color="#e81c26"/><stop offset="1" stop-color="#d3313f"/></linearGradient>
</defs>
<rect x="27.15" y="550.9" width="194.95" height="62.1" fill="none" stroke="url(#rb1)" stroke-width="6.6"/>
<path d="M221.5 613 L352.5 1066" stroke="url(#ar)" stroke-width="5.8" stroke-linecap="butt"/>
<path d="M361.8 1087.8 L342.4 1066.5 L353 1068.3 L365.2 1059.5 Z" fill="#d9344a" stroke="#d9344a" stroke-width="1.2" stroke-linejoin="round"/>
<rect x="338.25" y="1104.45" width="96.7" height="54.35" fill="none" stroke="url(#rb2)" stroke-width="6.3"/>
</svg>
</body></html>
